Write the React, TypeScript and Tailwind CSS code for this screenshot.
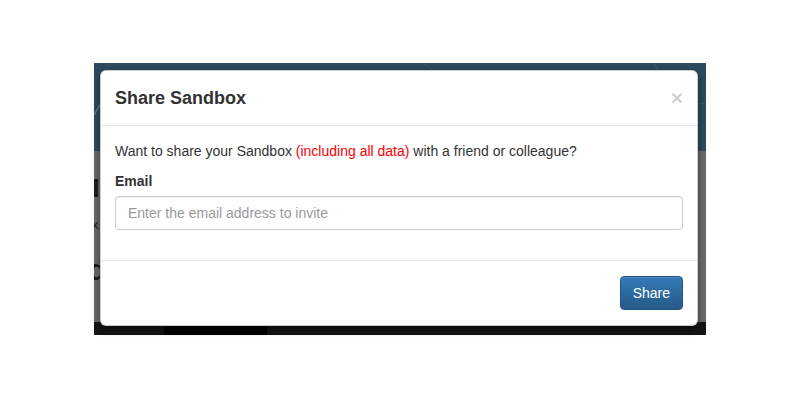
import React from 'react';

function Backdrop() {
  return (
    <div className="absolute inset-0 flex flex-col">
      <div className="h-[88px] bg-[#2d4b60] relative overflow-hidden">
        <svg className="absolute inset-0 w-full h-full" viewBox="0 0 612 88" fill="none">
          <path d="M0 52 L14 28" stroke="#5d7a8e" strokeWidth="1.5" />
          <path d="M560 0 L600 88" stroke="#3b5a70" strokeWidth="1" />
          <path d="M612 40 C590 42 570 48 560 56" stroke="#3b5a70" strokeWidth="1" />
          <path d="M330 0 L350 18" stroke="#3a596e" strokeWidth="1" />
        </svg>
      </div>
      <div className="flex-1 bg-[#6d6d6d] relative overflow-hidden font-['Liberation_Sans',sans-serif] text-[#1a1a1a]">
        <div className="absolute left-0 top-[28px] w-[4px] h-[18px] bg-[#1e1e1e]" />
        <div className="absolute left-[-2px] top-[64px] text-[13px]">x.</div>
        <div className="absolute left-[-6px] top-[104px] text-[30px] font-bold leading-none">d</div>
      </div>
      <div className="h-[13px] bg-[#141414] flex">
        <div className="w-[70px]" />
        <div className="w-[103px] bg-black" />
      </div>
    </div>
  );
}

function ShareModal() {
  return (
    <div className="absolute left-[6px] top-[7px] w-[598px] bg-white rounded-[6px] border border-black/20 shadow-[0_3px_9px_rgba(0,0,0,0.5)] font-['Liberation_Sans',sans-serif] text-[#333] text-[14px] leading-[20px]">
      <div className="flex items-center justify-between px-[14px] py-[14px] border-b border-[#e5e5e5]">
        <h4 className="text-[18px] leading-[26px] font-bold text-[#333]">Share Sandbox</h4>
        <button className="text-[21px] font-bold leading-none text-black/20 -mt-[2px]">×</button>
      </div>
      <div className="px-[14px] py-[15px]">
        <p className="mb-[10px]">
          Want to share your Sandbox <span className="text-[#ff0000]">(including all data)</span> with a friend or colleague?
        </p>
        <div className="mb-[15px]">
          <label className="block font-bold mb-[5px]">Email</label>
          <input
            type="email"
            placeholder="Enter the email address to invite"
            className="block w-full h-[34px] px-[12px] border border-[#ccc] rounded-[4px] shadow-[inset_0_1px_1px_rgba(0,0,0,0.075)] text-[14px] placeholder:text-[#999] outline-none"
          />
        </div>
      </div>
      <div className="flex justify-end px-[14px] py-[15px] border-t border-[#e5e5e5]">
        <button className="h-[34px] px-[12px] rounded-[4px] border border-[#245580] bg-linear-to-b from-[#337ab7] to-[#265a88] text-white text-[14px] shadow-[inset_0_1px_0_rgba(255,255,255,0.15)]">
          Share
        </button>
      </div>
    </div>
  );
}

export default function App() {
  return (
    <div className="w-[800px] h-[400px] bg-white pt-[63px] pl-[94px]">
      <div className="relative w-[612px] h-[272px]">
        <Backdrop />
        <ShareModal />
      </div>
    </div>
  );
}
